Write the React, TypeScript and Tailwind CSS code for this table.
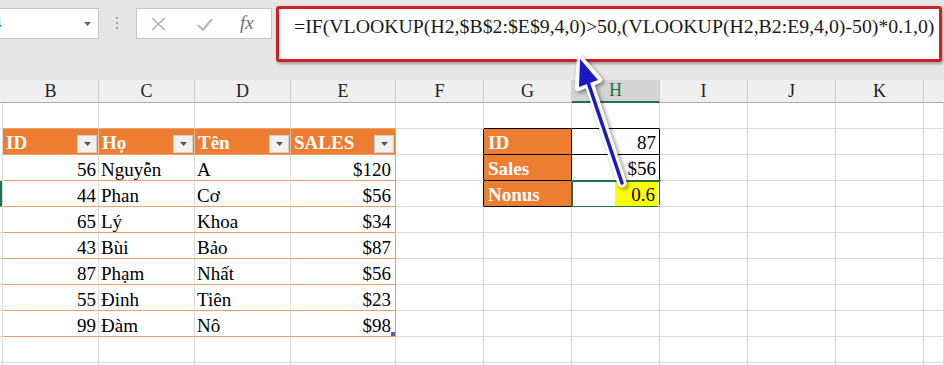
import React from "react";

const LETTERS = ["B", "C", "D", "E", "F", "G", "H", "I", "J", "K"];
const HEAD = ["ID", "Họ", "Tên", "SALES"];
const ROWS: string[][] = [
  ["56", "Nguyễn", "A", "$120"],
  ["44", "Phan", "Cơ", "$56"],
  ["65", "Lý", "Khoa", "$34"],
  ["43", "Bùi", "Bảo", "$87"],
  ["87", "Phạm", "Nhất", "$56"],
  ["55", "Đinh", "Tiên", "$23"],
  ["99", "Đàm", "Nô", "$98"],
];
const BOX = [
  ["ID", "87"],
  ["Sales", "$56"],
  ["Nonus", "0.6"],
];

const FilterButton = () => (
  <span className="ml-auto mr-[1px] mt-[6px] w-[20px] h-[18px] bg-[#f0f0f0] border border-[#cfcfcf] flex items-center justify-center">
    <svg width="7" height="4" viewBox="0 0 7 4">
      <path d="M0 0h7L3.5 4z" fill="#555" />
    </svg>
  </span>
);

const HeaderCell = ({ c }: { c: number }) => {
  if (c === 0 || c === 11) {
    return <div className="bg-[#efefef] border-b border-b-[#ababab]" />;
  }
  const selected = c === 7;
  return (
    <div
      className={`flex items-center justify-center text-[18px] border-r border-r-[#cdcdcd] ${
        selected
          ? "bg-[#d4d4d4] text-[#217346] border-b-2 border-b-[#217346]"
          : "bg-[#efefef] text-[#222] border-b border-b-[#ababab]"
      }`}
    >
      {LETTERS[c - 1]}
    </div>
  );
};

const Cell = ({ r, c }: { r: number; c: number }) => {
  const inTable = c >= 1 && c <= 4 && r >= 2 && r <= 9;
  const inBox = (c === 6 || c === 7) && r >= 2 && r <= 4;

  let right = "border-r-[#dadada]";
  let bottom = "border-b-[#dadada]";
  let bg = "bg-white";
  if (inTable || (r === 1 && c >= 1 && c <= 4)) bottom = "border-b-[#ee9f68]";
  if (inTable && c === 4) right = "border-r-[#ee9f68]";
  if (r === 2 && inTable) bg = "bg-[#ed7d31]";
  if (r === 2 && inTable && c < 4) right = "border-r-[#f5b68b]";
  if (inBox || (c === 5 && r >= 2 && r <= 4)) right = "border-r-black";
  if (inBox || ((c === 6 || c === 7) && r === 1)) bottom = "border-b-black";
  if (inBox && c === 6) bg = "bg-[#ed7d31]";

  let content: React.ReactNode = null;

  if (c === 0 && r === 4) {
    return <div className="bg-white border-l-2 border-l-[#217346] border-r border-r-[#dadada] border-b border-b-[#dadada]" />;
  }

  if (inTable && r === 2) {
    content = (
      <>
        <span className="pl-[3px] pt-[3px] font-bold text-white">{HEAD[c - 1]}</span>
        <FilterButton />
      </>
    );
  } else if (inTable) {
    const val = ROWS[r - 3][c - 1];
    if (c === 1) content = <span className="ml-auto pr-[2px] pt-[4px]">{val}</span>;
    else if (c === 4)
      content = (
        <>
          <span className="ml-auto pr-[4px] pt-[4px]">{val}</span>
          {r === 9 && <span className="absolute right-0 bottom-0 w-[4px] h-[4px] bg-[#5a5aa8]" />}
        </>
      );
    else content = <span className="pl-[2px] pt-[4px]">{val}</span>;
  } else if (inBox && c === 6) {
    content = <span className="pl-[4px] pt-[3px] font-bold text-white">{BOX[r - 2][0]}</span>;
  } else if (inBox && r === 4) {
    content = (
      <>
        <span className="ml-auto mr-[2px] bg-[#ffff00] pl-[16px] pr-[2px] pt-[3px]">{BOX[2][1]}</span>
        <span className="absolute -left-[1px] -top-[1px] w-[90px] h-[28px] border-2 border-[#217346]" />
        <span className="absolute -right-[4px] -bottom-[4px] w-[5px] h-[5px] bg-[#217346] border border-white" />
      </>
    );
  } else if (inBox) {
    content = <span className="ml-auto pr-[3px] pt-[3px]">{BOX[r - 2][1]}</span>;
  }

  return (
    <div className={`relative flex items-start border-r border-b text-[19px] leading-[22px] text-black ${right} ${bottom} ${bg}`}>
      {content}
    </div>
  );
};

export default function App() {
  return (
    <div className="relative w-[944px] h-[365px] overflow-hidden bg-white font-['Liberation_Serif',serif]">
      {/* formula bar */}
      <div className="h-[80px] bg-[#e6e6e6] flex items-start">
        <div className="mt-[8px] w-[99px] h-[31px] bg-white border border-l-0 border-[#c6c6c6] flex items-center overflow-hidden">
          <span className="-ml-[7px] font-['Liberation_Sans',sans-serif] text-[16px] text-[#2e75b6]">4</span>
          <svg className="ml-auto mr-[7px]" width="7" height="4" viewBox="0 0 7 4">
            <path d="M0 0h7L3.5 4z" fill="#666" />
          </svg>
        </div>
        <div className="ml-[17px] mt-[17px] flex flex-col gap-[3px]">
          <span className="w-[2px] h-[2px] bg-[#a3a3a3]" />
          <span className="w-[2px] h-[2px] bg-[#a3a3a3]" />
          <span className="w-[2px] h-[2px] bg-[#a3a3a3]" />
        </div>
        <div className="ml-[18px] mt-[8px] w-[136px] h-[31px] bg-white border border-[#c6c6c6] flex items-center">
          <svg className="ml-[14px]" width="15" height="14" viewBox="0 0 15 14">
            <path d="M1 1l13 12M14 1L1 13" stroke="#b0b0b0" strokeWidth="1.6" fill="none" />
          </svg>
          <svg className="ml-[31px] mt-[2px]" width="16" height="13" viewBox="0 0 16 13">
            <path d="M1 7l5 5L15 1" stroke="#b4b4b4" strokeWidth="2" fill="none" />
          </svg>
          <span className="ml-[27px] italic text-[19px] text-[#707070]">fx</span>
        </div>
        <div className="ml-[4px] mt-[6px] w-[666px] h-[56px] bg-white border-[3px] border-[#d21f26] rounded-[3px] shadow-[1px_2px_3px_rgba(0,0,0,0.3)] pl-[15px] pt-[5px] whitespace-nowrap text-[19.8px] leading-[24px] text-[#1a1a1a]">
          =IF(VLOOKUP(H2,$B$2:$E$9,4,0)&gt;50,(VLOOKUP(H2,B2:E9,4,0)-50)*0.1,0)
        </div>
      </div>

      {/* sheet */}
      <div className="grid grid-cols-[3px_96px_96px_96px_105px_88px_88px_88px_88px_88px_88px_20px] grid-rows-[23px] auto-rows-[26px]">
        {Array.from({ length: 12 }, (_, c) => (
          <HeaderCell key={`h${c}`} c={c} />
        ))}
        {Array.from({ length: 11 }, (_, i) =>
          Array.from({ length: 12 }, (_, c) => <Cell key={`${i}-${c}`} r={i + 1} c={c} />),
        )}
      </div>

      {/* arrow */}
      <svg className="absolute left-0 top-0 pointer-events-none" width="944" height="365">
        <defs>
          <filter id="sh" x="-50%" y="-50%" width="200%" height="200%">
            <feDropShadow dx="2" dy="2" stdDeviation="2" floodColor="#000" floodOpacity="0.45" />
          </filter>
        </defs>
        <g filter="url(#sh)">
          <line x1="622" y1="183" x2="588" y2="80" stroke="white" strokeWidth="9" strokeLinecap="round" />
          <polygon points="580,58 599,80 578,88" fill="white" stroke="white" strokeWidth="6" strokeLinejoin="round" />
        </g>
        <line x1="622" y1="183" x2="588" y2="82" stroke="#1a1ac4" strokeWidth="3.5" strokeLinecap="round" />
        <polygon points="580,59 598,80 579,87" fill="#1a1ac4" />
      </svg>
    </div>
  );
}
